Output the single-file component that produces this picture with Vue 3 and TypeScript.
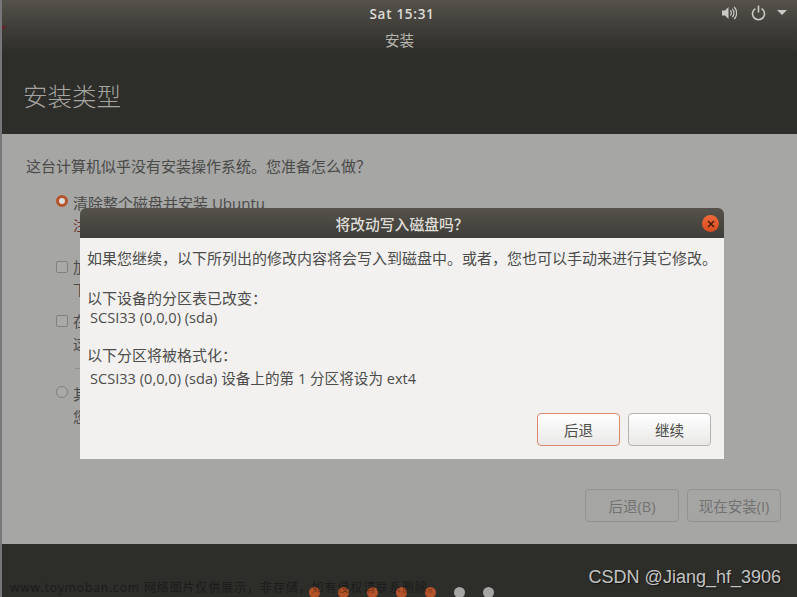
<script setup lang="ts">
interface InstallOption {
  kind: 'radio' | 'check'
  checked?: boolean
  label: string
  note: string
  warn?: boolean
  divider?: boolean
}

const options: InstallOption[] = [
  { kind: 'radio', checked: true, label: '清除整个磁盘并安装 Ubuntu', note: '注意：这会删除所有系统里面的全部程序、文档、照片、音乐和其他文件。', warn: true },
  { kind: 'check', label: '加密 Ubuntu 新安装以提高安全性', note: '下一步您将选择一个安全密钥。' },
  { kind: 'check', label: '在 Ubuntu 新安装上使用 LVM', note: '这将设置逻辑卷管理。它允许创建快照和更方便地调整分区大小。' },
  { kind: 'radio', label: '其他选项', note: '您可以自己创建、调整分区，或者为 Ubuntu 选择多个分区。', divider: true },
]

// 安装进度圆点：前五个已完成
const dots = [true, true, true, true, true, false, false]
</script>

<template>
  <div class="screen">
    <div class="topbar">
      <span class="clock">Sat 15:31</span>
      <div class="tray">
        <svg width="15" height="14" viewBox="0 0 15 14">
          <path d="M0 4.5h3L6.5 1v12L3 9.5H0z" fill="#c9c8c4" />
          <path d="M8.3 4.5a3.5 3.5 0 0 1 0 5M10.2 2.8a6 6 0 0 1 0 8.4M12.2 1a8.6 8.6 0 0 1 0 12" fill="none" stroke="#c9c8c4" stroke-width="1.2" />
        </svg>
        <svg class="power" width="15" height="16" viewBox="0 0 15 16">
          <path d="M4.4 3.6a6 6 0 1 0 6.2 0" fill="none" stroke="#c9c8c4" stroke-width="1.6" />
          <path d="M7.5 0.5v7" stroke="#c9c8c4" stroke-width="1.6" />
        </svg>
        <svg class="caret" width="10" height="5" viewBox="0 0 10 5"><path d="M0 0h10L5 5z" fill="#c9c8c4" /></svg>
      </div>
    </div>
    <span class="corner"></span>

    <div class="titlebar">安装</div>
    <header class="header"><h1>安装类型</h1></header>

    <main class="content">
      <p class="question">这台计算机似乎没有安装操作系统。您准备怎么做？</p>

      <div class="options">
        <div v-for="opt in options" :key="opt.label">
          <hr v-if="opt.divider" class="divider" />
          <div class="option" :class="{ short: opt.kind === 'check' }">
            <span :class="[opt.kind, { checked: opt.checked }]"></span>
            <div class="option-text">
              <div class="label">{{ opt.label }}</div>
              <div class="note" :class="{ warn: opt.warn }">{{ opt.note }}</div>
            </div>
          </div>
        </div>
      </div>

      <div class="actions">
        <button class="btn-off">后退(B)</button>
        <button class="btn-off">现在安装(I)</button>
      </div>
    </main>

    <footer class="footer">
      <span v-for="(done, i) in dots" :key="i" class="dot" :class="{ done }"></span>
    </footer>

    <section class="dialog">
      <div class="dialog-title">
        <span>将改动写入磁盘吗？</span>
        <span class="close">
          <svg width="8" height="8" viewBox="0 0 8 8"><path d="M1 1l6 6M7 1L1 7" stroke="#3a1a0c" stroke-width="1.4" /></svg>
        </span>
      </div>
      <div class="dialog-body">
        <p class="lead">如果您继续，以下所列出的修改内容将会写入到磁盘中。或者，您也可以手动来进行其它修改。</p>
        <p class="sub">以下设备的分区表已改变：</p>
        <p class="item first">SCSI33 (0,0,0) (sda)</p>
        <p class="sub second">以下分区将被格式化：</p>
        <p class="item">SCSI33 (0,0,0) (sda) 设备上的第 1 分区将设为 ext4</p>
        <div class="dialog-actions">
          <button class="btn focus">后退</button>
          <button class="btn">继续</button>
        </div>
      </div>
    </section>

    <span class="mark-site">www.toymoban.com 网络图片仅供展示，非存储，如有侵权请联系删除。</span>
    <span class="mark-csdn">CSDN @Jiang_hf_3906</span>
  </div>
</template>

<style scoped>
.screen {
  position: relative;
  width: 797px;
  height: 597px;
  box-sizing: border-box;
  border-left: 2px solid #77777a;
  display: flex;
  flex-direction: column;
  overflow: hidden;
  font-family: "Open Sans", "Noto Sans CJK SC", sans-serif;
  font-size: 15px;
  color: #4a4a48;
}

.topbar {
  flex: none;
  height: 27px;
  position: relative;
  display: flex;
  align-items: center;
  justify-content: center;
  background: linear-gradient(#55524b, #403e39);
  color: #dfddd8;
  font-size: 13.5px;
  font-weight: 600;
}

.clock {
  margin-left: 5px;
  letter-spacing: 0.7px;
}

.tray {
  position: absolute;
  right: 10px;
  top: 4px;
  display: flex;
  align-items: center;
  height: 17px;
}

.power {
  margin-left: 14px;
}

.caret {
  margin-left: 11px;
}

.corner {
  position: absolute;
  left: 0;
  top: 26px;
  width: 5px;
  height: 4px;
  background: #6e1f2a;
  clip-path: polygon(0 0, 100% 0, 0 100%);
}

.titlebar {
  flex: none;
  height: 28px;
  line-height: 28px;
  text-align: center;
  background: linear-gradient(#403e39, #2d2d2a);
  color: #b8b6b0;
  font-size: 14.5px;
}

.header {
  flex: none;
  height: 79px;
  background: #2d2d2a;
  display: flex;
  align-items: center;
  padding-left: 21px;
}

.header h1 {
  margin: 1px 0 0;
  font-size: 24.5px;
  font-weight: 300;
  color: #a5a4a0;
}

.content {
  flex: 1;
  display: flex;
  flex-direction: column;
  background: #a6a6a5;
  padding: 21px 16px 22px 24px;
}

.question {
  margin: 0;
  line-height: 22px;
}

.options {
  margin-top: 17px;
  padding-left: 30px;
}

.option {
  display: flex;
  gap: 5px;
  height: 64px;
}

.option.short {
  height: 54px;
}

.option-text {
  line-height: 22px;
  white-space: nowrap;
}

.label {
  margin-top: -2px;
}

.note {
  margin-top: 1px;
  font-size: 14px;
}

.warn {
  color: #6d2f2a;
}

.radio,
.check {
  flex: none;
  box-sizing: border-box;
  width: 12px;
  height: 12px;
  margin-top: 1px;
  border: 1px solid #80807e;
  background: #a9a9a8;
}

.radio {
  border-radius: 50%;
}

.check {
  border-radius: 2px;
  margin-top: 3px;
}

.radio.checked {
  border: 3.5px solid #b5532a;
  background: #dcdcdb;
}

.divider {
  margin: 2px 0 16px 19px;
  width: 160px;
  border: none;
  border-top: 1px solid #8e8e8d;
}

.actions {
  margin-top: auto;
  display: flex;
  justify-content: flex-end;
  gap: 8px;
}

.btn-off {
  width: 94px;
  height: 33px;
  padding: 0;
  border: 1px solid #929291;
  border-radius: 4px;
  background: #a5a5a4;
  color: #727271;
  font: inherit;
  font-size: 14.5px;
}

.footer {
  flex: none;
  height: 53px;
  box-sizing: border-box;
  background: #2d2d2a;
  display: flex;
  justify-content: center;
  gap: 18px;
  padding: 43px 0 0 3px;
}

.dot {
  flex: none;
  width: 11px;
  height: 11px;
  border-radius: 50%;
  background: #a6a6a5;
}

.dot.done {
  background: #b5532a;
}

.dialog {
  position: absolute;
  left: 78px;
  top: 208px;
  width: 644px;
  height: 251px;
  display: flex;
  flex-direction: column;
  border-radius: 6px 6px 0 0;
  overflow: hidden;
}

.dialog-title {
  flex: none;
  height: 30px;
  position: relative;
  display: flex;
  align-items: center;
  justify-content: center;
  background: linear-gradient(#55524b, #3f3d38);
  color: #dfddd8;
  font-size: 14.8px;
  font-weight: 500;
}

.close {
  position: absolute;
  right: 5px;
  top: 7px;
  width: 17px;
  height: 17px;
  border-radius: 50%;
  display: flex;
  align-items: center;
  justify-content: center;
  background: linear-gradient(#f0693a, #d64d1f);
}

.dialog-body {
  flex: 1;
  display: flex;
  flex-direction: column;
  background: #f2f1f0;
  padding: 9px 13px 13px 7px;
  color: #4c4c4a;
}

.dialog-body p {
  margin: 0;
  line-height: 22px;
  white-space: nowrap;
}

.dialog-body .sub {
  margin-top: 18px;
}

.dialog-body .sub.second {
  margin-top: 16px;
}

.dialog-body .item {
  padding-left: 3px;
  font-size: 14.6px;
  margin-top: 1px;
}

.dialog-body .item.first {
  margin-top: -3px;
}

.dialog-actions {
  margin-top: auto;
  display: flex;
  justify-content: flex-end;
  gap: 8px;
}

.btn {
  width: 83px;
  height: 33px;
  padding: 0;
  border: 1px solid #b3b3b2;
  border-radius: 4px;
  background: linear-gradient(#ffffff, #e9e8e7);
  color: #4c4c4a;
  font: inherit;
  font-size: 14.5px;
}

.btn.focus {
  border-color: #d98a6c;
}

.mark-site {
  position: absolute;
  left: 8px;
  top: 579px;
  color: rgba(0, 0, 0, 0.4);
  font-size: 12px;
  line-height: 18px;
  letter-spacing: 0.9px;
  white-space: nowrap;
}

.mark-csdn {
  position: absolute;
  right: 16px;
  top: 566px;
  color: #c4c4c2;
  font-family: "Liberation Sans", sans-serif;
  font-size: 18px;
  line-height: 22px;
  text-shadow: 1px 1px 1px #111;
  white-space: nowrap;
}
</style>
